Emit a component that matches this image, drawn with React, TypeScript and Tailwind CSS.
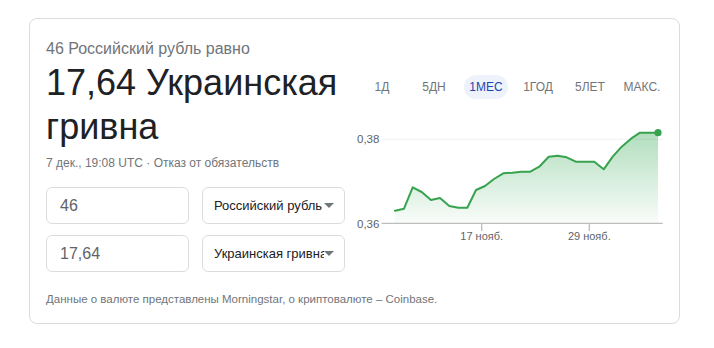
import React from "react";

const pts: [number, number][] = [
  [39, 100.7], [48, 98.7], [56.7, 77.3], [65.7, 82], [75, 90], [84, 88], [93.3, 96], [102.3, 97.7],
  [111.3, 97.7], [120, 80], [129, 76], [138, 69], [147.3, 63.3], [156.3, 62.7], [165.3, 61.7],
  [174.3, 61.7], [183.3, 56.7], [192.7, 46.7], [201.7, 45.7], [210.7, 47.3], [219.7, 51.7],
  [228.7, 51.7], [238.3, 51.7], [247.7, 59.3], [256.7, 46.7], [265.7, 36.7], [275, 28.7],
  [284, 22.7], [293, 22.7], [302, 22.7],
];

function Chart() {
  const line = pts.map((p) => p.join(",")).join(" ");
  const area = `${line} 302,113.3 39,113.3`;
  return (
    <svg width="312" height="135" viewBox="0 0 312 135" className="block mt-[11px]">
      <defs>
        <linearGradient id="g" x1="0" y1="0" x2="0" y2="1">
          <stop offset="0" stopColor="#34a853" stopOpacity="0.38" />
          <stop offset="1" stopColor="#34a853" stopOpacity="0.03" />
        </linearGradient>
      </defs>
      <line x1="25.7" y1="29.3" x2="306.7" y2="29.3" stroke="#f1f1f1" strokeWidth="1" />
      <polygon points={area} fill="url(#g)" />
      <polyline points={line} fill="none" stroke="#37a34f" strokeWidth="2" strokeLinejoin="round" strokeLinecap="round" />
      <circle cx="302" cy="22.7" r="3.6" fill="#37a34f" />
      <line x1="25.7" y1="113.3" x2="306.7" y2="113.3" stroke="#bdbdbd" strokeWidth="1.3" />
      <line x1="125.7" y1="113.3" x2="125.7" y2="121" stroke="#bdbdbd" strokeWidth="1.3" />
      <line x1="233.3" y1="113.3" x2="233.3" y2="121" stroke="#bdbdbd" strokeWidth="1.3" />
      <g fontFamily="'Liberation Sans', Arial, sans-serif" fill="#5f6368">
        <text x="1" y="33.3" fontSize="11.5">0,38</text>
        <text x="1" y="118.3" fontSize="11.5">0,36</text>
        <text x="125.7" y="129.7" fontSize="11" textAnchor="middle">17 нояб.</text>
        <text x="233.3" y="129.7" fontSize="11" textAnchor="middle">29 нояб.</text>
      </g>
    </svg>
  );
}

function Arrow() {
  return (
    <svg width="10" height="5" viewBox="0 0 10 5" className="shrink-0">
      <path d="M0 0 L10 0 L5 5 Z" fill="#70757a" />
    </svg>
  );
}

export default function App() {
  const tabs = ["1Д", "5ДН", "1МЕС", "1ГОД", "5ЛЕТ", "МАКС."];
  return (
    <div className="w-[714px] h-[348px] bg-white overflow-hidden pt-[18px] pl-[29px]" style={{ fontFamily: "'Liberation Sans', Arial, sans-serif" }}>
      <div className="w-[651px] h-[306px] border border-[#dadce0] rounded-lg pt-[20px] pl-4 pr-[10px]">
        <div className="flex gap-[11px]">
          <div className="w-[299px]">
            <div className="text-[16px] leading-5 text-[#70757a]">46 Российский рубль равно</div>
            <div className="mt-[2px] text-[36px] leading-[44px] text-[#202124]">17,64 Украинская гривна</div>
            <div className="mt-[6px] text-[12px] leading-4 text-[#70757a]">7 дек., 19:08 UTC · Отказ от обязательств</div>
            <div className="mt-4 grid grid-cols-[143px_143px] gap-x-[13px] gap-y-[11px]">
              <div className="h-[37px] border border-[#dadce0] rounded-md pl-[13px] flex items-center text-[16px] text-[#5f6368]">46</div>
              <div className="h-[37px] border border-[#dadce0] rounded-md pl-[11px] pr-[10px] flex items-center">
                <div className="flex-1 overflow-hidden whitespace-nowrap text-[13px] text-[#202124]">Российский рубль</div>
                <Arrow />
              </div>
              <div className="h-[37px] border border-[#dadce0] rounded-md pl-[13px] flex items-center text-[16px] text-[#5f6368]">17,64</div>
              <div className="h-[37px] border border-[#dadce0] rounded-md pl-[11px] pr-[10px] flex items-center">
                <div className="flex-1 overflow-hidden whitespace-nowrap text-[13px] text-[#202124]">Украинская гривна</div>
                <Arrow />
              </div>
            </div>
          </div>
          <div className="w-[312px]">
            <div className="mt-[36px] flex h-6">
              {tabs.map((t) => (
                <div key={t} className="w-[52px] flex items-center justify-center">
                  {t === "1МЕС" ? (
                    <div className="w-[44px] h-6 rounded-full bg-[#eef3fb] flex items-center justify-center text-[12px] text-[#1a47b0]">{t}</div>
                  ) : (
                    <div className="text-[12px] text-[#70757a]">{t}</div>
                  )}
                </div>
              ))}
            </div>
            <Chart />
          </div>
        </div>
        <div className="mt-[19px] text-[11.5px] leading-4 text-[#70757a]">Данные о валюте представлены Morningstar, о криптовалюте – Coinbase.</div>
      </div>
    </div>
  );
}
